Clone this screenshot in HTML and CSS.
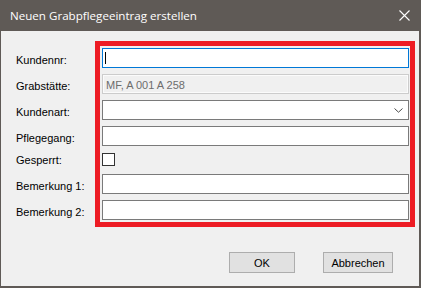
FILE: index.html
```html
<!DOCTYPE html>
<html lang="de">
<head>
    <meta charset="UTF-8">
    <title>Neuen Grabpflegeeintrag erstellen</title>
    <link rel="stylesheet" href="styles.css">
</head>
<body>
    <div class="window">
        <div class="titlebar">
            <span class="title">Neuen Grabpflegeeintrag erstellen</span>
            <svg class="close" width="11" height="11" viewBox="0 0 11 11">
                <path d="M0.5 0.5 L10.5 10.5 M10.5 0.5 L0.5 10.5" stroke="#ffffff" stroke-width="1.1" fill="none"/>
            </svg>
        </div>

        <div class="content">
            <div class="form">
                <label class="lbl">Kundennr:</label>
                <div class="field focused">
                    <input type="text" class="txt">
                    <span class="caret"></span>
                </div>

                <label class="lbl">Grabstätte:</label>
                <div class="field">
                    <input type="text" class="txt disabled" value="MF, A 001 A 258" disabled>
                </div>

                <label class="lbl">Kundenart:</label>
                <div class="field">
                    <div class="txt combo"></div>
                    <svg class="chevron" width="9" height="5" viewBox="0 0 9 5">
                        <path d="M0.5 0.5 L4.5 4.2 L8.5 0.5" stroke="#4a4a4a" stroke-width="1" fill="none"/>
                    </svg>
                </div>

                <label class="lbl">Pflegegang:</label>
                <div class="field">
                    <input type="text" class="txt">
                </div>

                <label class="lbl lbl-check">Gesperrt:</label>
                <div class="field check-row">
                    <span class="checkbox"></span>
                </div>

                <label class="lbl">Bemerkung 1:</label>
                <div class="field">
                    <input type="text" class="txt">
                </div>

                <label class="lbl">Bemerkung 2:</label>
                <div class="field">
                    <input type="text" class="txt">
                </div>
            </div>

            <div class="buttons">
                <button class="btn btn-ok">OK</button>
                <button class="btn btn-cancel">Abbrechen</button>
            </div>
        </div>

        <div class="highlight"></div>
    </div>
</body>
</html>
```

FILE: styles.css
```css
* {
    box-sizing: border-box;
    margin: 0;
    padding: 0;
}

body {
    width: 421px;
    height: 288px;
    overflow: hidden;
    background: #f0f0f0;
    font-family: 'Liberation Sans', Arial, sans-serif;
    font-size: 11px;
    color: #000000;
}

.window {
    position: relative;
    width: 421px;
    height: 288px;
    background: #f0f0f0;
    border-left: 1px solid #5f5a56;
    border-right: 2px solid #5f5a56;
    border-bottom: 2px solid #5f5a56;
}

.titlebar {
    height: 31px;
    background: #5f5a56;
    display: flex;
    align-items: center;
    justify-content: space-between;
    padding: 0 9px 1px 9px;
}

.title {
    font-family: 'Open Sans', 'Noto Sans', sans-serif;
    font-size: 11.6px;
    color: #ffffff;
}

.close {
    display: block;
    margin-top: 1px;
}

.content {
    padding: 17px 0 0 15px;
}

.form {
    display: grid;
    grid-template-columns: 86px 307px;
    grid-template-rows: repeat(4, 20px) 16px repeat(2, 20px);
    row-gap: 6px;
}

.lbl {
    display: flex;
    align-items: center;
    padding-top: 3px;
}

.lbl-check {
    padding-top: 0;
}

.field {
    position: relative;
    height: 20px;
}

.txt {
    display: block;
    width: 100%;
    height: 20px;
    border: 1px solid #7a7a7a;
    background: #ffffff;
    font-family: 'Liberation Sans', Arial, sans-serif;
    font-size: 11px;
    padding: 0 3px;
    outline: none;
}

.focused .txt {
    border-color: #0078d7;
}

.caret {
    position: absolute;
    left: 3px;
    top: 4px;
    width: 1px;
    height: 12px;
    background: #000000;
}

.txt.disabled {
    border-color: #cccccc;
    background: #f0f0f0;
    box-shadow: inset 0 0 0 1px #fbfbfb;
    color: #6d6d6d;
    padding-top: 1px;
}

.chevron {
    position: absolute;
    right: 6px;
    top: 8px;
}

.field.check-row {
    height: 16px;
}

.checkbox {
    display: block;
    width: 13px;
    height: 13px;
    margin-top: 1px;
    border: 1px solid #333333;
    background: #ffffff;
}

.buttons {
    display: flex;
    gap: 28px;
    margin-top: 32px;
    padding-left: 213px;
}

.btn {
    height: 21px;
    background: #e1e1e1;
    border: 1px solid #adadad;
    font-family: 'Liberation Sans', Arial, sans-serif;
    font-size: 11px;
    color: #000000;
}

.btn-ok {
    width: 66px;
}

.btn-cancel {
    width: 70px;
}

.highlight {
    position: absolute;
    left: 94px;
    top: 41px;
    width: 320px;
    height: 186px;
    border: 5px solid #ed1c24;
    pointer-events: none;
}
```
